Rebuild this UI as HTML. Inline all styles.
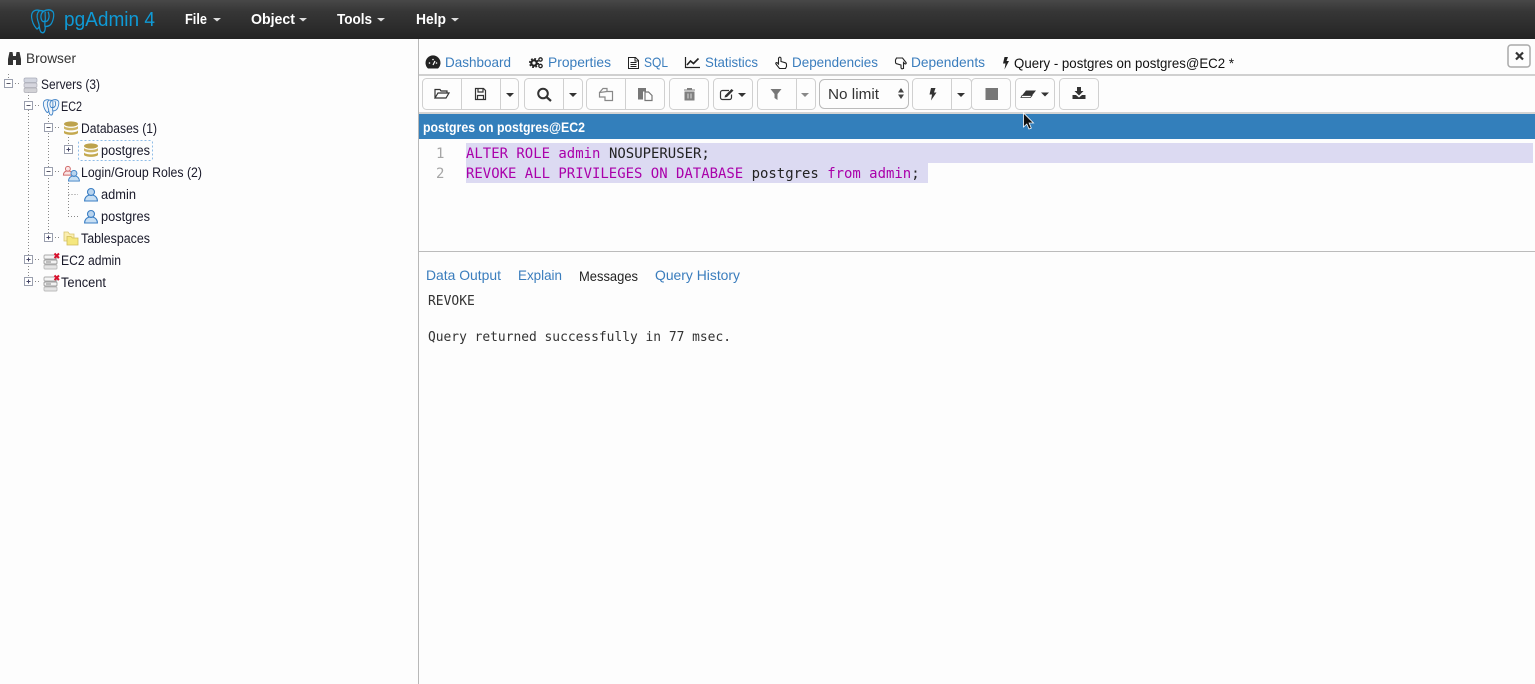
<!DOCTYPE html>
<html><head><meta charset="utf-8"><title>pgAdmin 4</title>
<style>
html,body{margin:0;padding:0;width:1535px;height:684px;overflow:hidden;background:#fdfdfd}
svg{display:block}
text{font-family:"Liberation Sans",sans-serif;font-size:14px;fill:#222}
.l{fill:#3a7dbd}
.m{fill:#fff;font-size:15px;font-weight:bold}
.t{fill:#1a1a2a;font-size:13.500px}
.c{font-family:"DejaVu Sans Mono",monospace;font-size:14px;fill:#222}
.p{font-family:"DejaVu Sans Mono",monospace;font-size:14px;fill:#a0a}
.o{font-family:"DejaVu Sans Mono",monospace;font-size:13px;fill:#333}
.n{font-family:"DejaVu Sans Mono",monospace;font-size:14px;fill:#a6a6a6}
.b{fill:#fdfdfd;stroke:#d0d0d0;stroke-width:1}
.d{stroke:#d0d0d0;stroke-width:1}
.dot{stroke:#888;stroke-width:1;stroke-dasharray:1 2;fill:none}
</style></head><body>
<svg width="1535" height="684" viewBox="0 0 1535 684" xmlns="http://www.w3.org/2000/svg">
<defs>
<linearGradient id="hd" x1="0" y1="0" x2="0" y2="1"><stop offset="0" stop-color="#484848"/><stop offset=".3" stop-color="#363636"/><stop offset=".7" stop-color="#2c2c2c"/><stop offset="1" stop-color="#232323"/></linearGradient>
<g id="minus"><rect x="-4" y="-4" width="8" height="8" fill="#fff" stroke="#9a9fae"/><path d="M-2 0H2" stroke="#556" fill="none"/></g>
<g id="plus"><rect x="-4" y="-4" width="8" height="8" fill="#fff" stroke="#9a9fae"/><path d="M-2 0H2M0-2V2" stroke="#446" fill="none"/></g>
<g id="db"><ellipse cx="7" cy="3" rx="7" ry="2.600" fill="#bda24c"/><path d="M0 5c2 2.500 12 2.500 14 0v2.500c-2 2.500-12 2.500-14 0z" fill="#cdb564"/><path d="M0 9.500c2 2.500 12 2.500 14 0V12c-2 2.500-12 2.500-14 0z" fill="#c4a94f"/></g>
<g id="srv"><rect x="0" y="0" width="13" height="4.500" rx="1.500" fill="#d2d5df" stroke="#a8abb8" stroke-width=".7"/><rect x="0" y="5" width="13" height="4.500" rx="1.500" fill="#d6d6de" stroke="#aeaeb8" stroke-width=".7"/><rect x="0" y="10" width="13" height="4.500" rx="1.500" fill="#d2d2d6" stroke="#aeaeb6" stroke-width=".7"/></g>
<g id="srvx"><rect x="0" y="1" width="13" height="4" rx="1" fill="#f4f4f4" stroke="#aaa" stroke-width=".9"/><rect x="0" y="6" width="13" height="4" rx="1" fill="#f2f2f2" stroke="#999" stroke-width=".9"/><path d="M2 8H7" stroke="#888"/><rect x="0" y="11" width="13" height="4" rx="1" fill="#e4e4e4" stroke="#bbb" stroke-width=".9"/><path d="M10.500-.5l4.500 4.500M15-.5l-4.500 4.500" stroke="#d8102c" stroke-width="2" fill="none"/></g>
<g id="user"><circle cx="7" cy="4" r="3.500" fill="#b9d4ee" stroke="#3a7ec4" stroke-width="1.100"/><path d="M.6 13c0-4 3-5.500 4.500-6 1.200.6 2.600.6 3.800 0 1.500.5 4.500 2 4.500 6z" fill="#c8dff3" stroke="#3a7ec4" stroke-width="1.100"/></g>
<path id="ele" d="M7 1C3 0 0 2 .5 6c.4 3 2 6 4 8 .8.800 1.600-.5 2.300-1.500.4 2 .7 4.500 2.700 4.500 1.500 0 2.200-2 2.200-4.500 1.500 0 3 0 4.500-1.500C18 9 19.500 4 18 2 16 0 12.500.5 10.500 1.500 9.500 1.300 8 1.200 7 1zM7 1c-1.800 1.500-2.500 4-1.500 7 .4 1.500 1.200 2.300 1.300 4.500M10.500 1.500c-2 1-3 3.500-2 6 .6 1.500 2 2 3 1 .7-2-.3-4 .2-6.500M14 2c1 2 1 4 .2 5.500-.7 1.200-2 1.500-2.700 1.500-.2 1.500-.2 3.500.2 4.200"/>
</defs>

<rect width="1535" height="684" fill="#fdfdfd"/>
<rect width="1535" height="39" fill="url(#hd)"/>
<use href="#ele" transform="translate(31,9) scale(1.220,1.400)" fill="none" stroke="#0f93cf" stroke-width="1"/>
<text x="64" y="26" textLength="91" lengthAdjust="spacingAndGlyphs" style="font-size:20px;fill:#0f9ad6">pgAdmin 4</text>
<text class="m" x="185" y="24" textLength="22" lengthAdjust="spacingAndGlyphs">File</text><path d="M213 18h8l-4 3.500z" fill="#ddd"/>
<text class="m" x="251" y="24" textLength="44" lengthAdjust="spacingAndGlyphs">Object</text><path d="M299 18h8l-4 3.500z" fill="#ddd"/>
<text class="m" x="337" y="24" textLength="35" lengthAdjust="spacingAndGlyphs">Tools</text><path d="M377 18h8l-4 3.500z" fill="#ddd"/>
<text class="m" x="416" y="24" textLength="30" lengthAdjust="spacingAndGlyphs">Help</text><path d="M451 18h8l-4 3.500z" fill="#ddd"/>

<!-- left panel -->
<rect x="418" y="39" width="1" height="645" fill="#b8b8b8"/>
<path d="M9.500 52h3l.5 3v10H8v-6zM16.500 52h3l1.500 7v6h-5V55zM13 56h3v4h-3z" fill="#333"/>
<text x="26" y="63" textLength="50" lengthAdjust="spacingAndGlyphs" style="fill:#333">Browser</text>

<path class="dot" d="M8.500 74V79M12 83.500H20M28.500 92V281M32 105.500H40M48.500 115V237M52 127.500H60M68.500 137V145M52 171.500H60M68.500 183V216.500H78M68.500 194.500H78M52 237.500H60M32 259.500H40M32 281.500H40"/>

<use href="#minus" x="8.500" y="83.500"/><use href="#srv" x="24" y="78"/><text class="t" x="41" y="89" textLength="59" lengthAdjust="spacingAndGlyphs">Servers (3)</text>
<use href="#minus" x="28.500" y="105.500"/><use href="#ele" transform="translate(43,99) scale(.85,.95)" fill="#eef4fa" stroke="#3a7ec4" stroke-width="1"/><text class="t" x="61" y="111" textLength="21" lengthAdjust="spacingAndGlyphs">EC2</text>
<use href="#minus" x="48.500" y="127.500"/><use href="#db" x="64" y="121"/><text class="t" x="81" y="133" textLength="76" lengthAdjust="spacingAndGlyphs">Databases (1)</text>
<use href="#plus" x="68.500" y="149.500"/>
<rect x="78.500" y="140.500" width="74" height="20" rx="2" fill="#fdfdfd" stroke="#8fbde8" stroke-dasharray="2 2"/>
<use href="#db" x="84" y="143"/><text class="t" x="101" y="155" textLength="49" lengthAdjust="spacingAndGlyphs">postgres</text>
<use href="#minus" x="48.500" y="171.500"/>
<g transform="translate(63,166) scale(.7)"><circle cx="7" cy="4" r="3.500" fill="#fbe5e5" stroke="#d06a6a" stroke-width="1.400"/><path d="M.6 13c0-4 3-5.500 4.500-6 1.200.6 2.600.6 3.800 0 1.500.5 4.500 2 4.500 6z" fill="#fbe5e5" stroke="#d06a6a" stroke-width="1.400"/></g>
<g transform="translate(68,170) scale(.85)"><use href="#user"/></g>
<text class="t" x="81" y="177" textLength="121" lengthAdjust="spacingAndGlyphs">Login/Group Roles (2)</text>
<use href="#user" x="84" y="188"/><text class="t" x="101" y="199" textLength="35" lengthAdjust="spacingAndGlyphs">admin</text>
<use href="#user" x="84" y="210"/><text class="t" x="101" y="221" textLength="49" lengthAdjust="spacingAndGlyphs">postgres</text>
<use href="#plus" x="48.500" y="237.500"/>
<path d="M64 232h4l1.500 2H74v7H64z" fill="#fbeeb0" stroke="#d8c56c" stroke-width=".8"/><path d="M67 236.500h4l1.500 1.500H78v7H67z" fill="#f5e77e" stroke="#cfbc5a" stroke-width=".8"/>
<text class="t" x="81" y="243" textLength="69" lengthAdjust="spacingAndGlyphs">Tablespaces</text>
<use href="#plus" x="28.500" y="259.500"/><use href="#srvx" x="44" y="254"/><text class="t" x="61" y="265" textLength="60" lengthAdjust="spacingAndGlyphs">EC2 admin</text>
<use href="#plus" x="28.500" y="281.500"/><use href="#srvx" x="44" y="276"/><text class="t" x="61" y="287" textLength="45" lengthAdjust="spacingAndGlyphs">Tencent</text>

<!-- tabs -->
<path d="M428 68.500a7.500 7.500 0 1 1 10 0z" fill="#222"/><path d="M433 65l2-4" stroke="#fff" stroke-width="1.200"/><circle cx="429.500" cy="63" r=".8" fill="#fff"/><circle cx="436.500" cy="63" r=".8" fill="#fff"/><circle cx="433" cy="59.500" r=".8" fill="#fff"/>
<text class="l" x="445" y="67" textLength="66" lengthAdjust="spacingAndGlyphs">Dashboard</text>
<circle cx="534" cy="63" r="2.700" fill="none" stroke="#222" stroke-width="2.200"/><circle cx="534" cy="63" r="4.300" fill="none" stroke="#222" stroke-width="1.500" stroke-dasharray="1.800 1.600"/><circle cx="540.500" cy="59.500" r="1.700" fill="none" stroke="#222" stroke-width="1.300"/><circle cx="540.500" cy="66" r="1.700" fill="none" stroke="#222" stroke-width="1.300"/>
<text class="l" x="548" y="67" textLength="63" lengthAdjust="spacingAndGlyphs">Properties</text>
<path d="M628.500 57.500h7l3 3v8h-10zM635 57.500v3.500h3.500M630.500 62.500h6M630.500 64.500h6M630.500 66.500h6" fill="none" stroke="#222"/>
<text class="l" x="644" y="67" textLength="24" lengthAdjust="spacingAndGlyphs">SQL</text>
<path d="M685.500 57v10.500H700" fill="none" stroke="#222" stroke-width="1.200"/><path d="M687 65l3.500-4 3 2.500 5-5" fill="none" stroke="#222" stroke-width="1.600"/>
<text class="l" x="705" y="67" textLength="53" lengthAdjust="spacingAndGlyphs">Statistics</text>
<path d="M779 57.500c1-.8 2 0 2 1v3l4.500 1.300c1 .3 1 1.200 1 2v1.700l-1 2h-6l-3.500-4.500c-.7-1 .6-2 1.500-1l1 1v-5.500z" fill="#fff" stroke="#222" stroke-width="1.100"/>
<text class="l" x="792" y="67" textLength="86" lengthAdjust="spacingAndGlyphs">Dependencies</text>
<path d="M903 68.500c-1 .8-2 0-2-1v-2.500l-4.500-1.300c-1-.3-1-1.200-1-2v-1.700l1-2h6l3.500 4.500c.7 1-.6 2-1.500 1l-1-1v6z" fill="#fff" stroke="#222" stroke-width="1.100"/>
<text class="l" x="911" y="67" textLength="74" lengthAdjust="spacingAndGlyphs">Dependents</text>
<path d="M1004.500 57h3.500l-1.500 4h2.500l-4.500 8.500 1-6h-2.500z" fill="#222"/>
<text x="1014" y="68" textLength="220" lengthAdjust="spacingAndGlyphs" style="fill:#111">Query - postgres on postgres@EC2 *</text>

<rect x="1508" y="45" width="22" height="22" rx="3" fill="#fdfdfd" stroke="#aaa" stroke-width="1.500"/>
<path d="M1516 52.500l7 7M1523 52.500l-7 7" stroke="#333" stroke-width="2.200"/>
<rect x="419" y="74" width="1116" height="2" fill="#d0d0d0"/>

<!-- toolbar -->
<rect x="422.500" y="78.500" width="96" height="31" rx="4" class="b"/><path class="d" d="M461.500 79V109M500.500 79V109"/>
<rect x="524.500" y="78.500" width="58" height="31" rx="4" class="b"/><path class="d" d="M563.500 79V109"/>
<rect x="586.500" y="78.500" width="78" height="31" rx="4" class="b"/><path class="d" d="M625.500 79V109"/>
<rect x="669.500" y="78.500" width="39" height="31" rx="4" class="b"/>
<rect x="713.500" y="78.500" width="39" height="31" rx="4" class="b"/>
<rect x="757.500" y="78.500" width="58" height="31" rx="4" class="b"/><path class="d" d="M796.500 79V109"/>
<rect x="819.500" y="79.500" width="89" height="29" rx="5" fill="#fdfdfd" stroke="#bbb"/>
<text x="828" y="99" textLength="51" lengthAdjust="spacingAndGlyphs" style="font-size:15px;fill:#333">No limit</text>
<path d="M901 88l3 4.500h-6zM901 99l3-4.500h-6z" fill="#444"/>
<rect x="912.500" y="78.500" width="59" height="31" rx="4" class="b"/><path class="d" d="M951.500 79V109"/>
<rect x="971.500" y="78.500" width="39" height="31" rx="4" class="b"/>
<rect x="1015.500" y="78.500" width="39" height="31" rx="4" class="b"/>
<rect x="1059.500" y="78.500" width="39" height="31" rx="4" class="b"/>

<path d="M435 98v-8.500h5l1 1.500h6v2.500M435 98h11l3-5h-11z" fill="none" stroke="#333" stroke-width="1.200"/>
<path d="M475.500 88.500h8l2 2v9h-10zM478 88.500v3.500h5v-3.500M477.500 99.500v-4h6v4" fill="none" stroke="#333" stroke-width="1.200"/>
<path d="M506 93h8l-4 4z" fill="#333"/>
<circle cx="543" cy="93.500" r="4.800" fill="none" stroke="#333" stroke-width="2"/><path d="M546.500 97l4.500 4" stroke="#333" stroke-width="2.200"/>
<path d="M569 93h8l-4 4z" fill="#333"/>
<path d="M599.500 92.500l3.500-4h4v3M607 91.500h5.500v9h-7.500v-3.500h-5.500V92.500z" fill="none" stroke="#888" stroke-width="1.200"/>
<path d="M638 88h8v3.500h-3v8h-5z" fill="#777"/><path d="M645 92h3.500l3.500 3.500v5h-7z" fill="#fff" stroke="#777" stroke-width="1.200"/>
<path d="M684 90h11M687.500 90v-1.500h4V90M685 92v8h9v-8z" fill="#808080" stroke="#808080"/><path d="M688 93.500v5M691 93.500v5" stroke="#ddd"/>
<path d="M729 90.500h-6.500a2 2 0 0 0-2 2v5a2 2 0 0 0 2 2h7a2 2 0 0 0 2-2v-3" fill="none" stroke="#333" stroke-width="1.200"/><path d="M725 95.500l6.500-6.500 2 1.500-6.500 6.500-2.500.5z" fill="#333"/><path d="M738 93h8l-4 4z" fill="#333"/>
<path d="M770.500 89h11l-4 5v6l-3-2v-4z" fill="#777"/>
<path d="M801 93h8l-4 4z" fill="#888"/>
<path d="M931 88h4.500l-1.500 4.500h2.500l-5.500 8 1-6h-2.500z" fill="#333"/>
<path d="M957 93h8l-4 4z" fill="#333"/>
<rect x="985.500" y="88" width="12.500" height="12" fill="#777"/>
<path d="M1026 90.500h10l-4 5h-10z" fill="#333"/><path d="M1022 95.500h10l-1.500 2h-9.500z" fill="#fff" stroke="#333" stroke-width=".8"/><path d="M1041 92.500h8l-4 4z" fill="#333"/>
<path d="M1077 87h4v4h2.500l-4.500 4.500-4.500-4.500h2.500zM1072.500 95h3.500l3 2.500 3-2.500h3.500v4h-13z" fill="#333"/>

<!-- title bar -->
<rect x="419" y="112" width="1116" height="2" fill="#d4d4d4"/>
<rect x="419" y="114" width="1116" height="25" fill="#337fbb"/>
<text x="423" y="132" textLength="162" lengthAdjust="spacingAndGlyphs" style="fill:#fff;font-weight:bold;font-size:13.500px">postgres on postgres@EC2</text>

<!-- editor -->
<rect x="466" y="143" width="1067" height="20" fill="#dcdaf2"/>
<rect x="466" y="163" width="462" height="20" fill="#dcdaf2"/>
<text class="n" x="436" y="158">1</text><text class="n" x="436" y="178">2</text>
<text class="p" x="466" y="158" textLength="134.400" lengthAdjust="spacingAndGlyphs">ALTER ROLE admin</text><text class="c" x="609" y="158" textLength="100.800" lengthAdjust="spacingAndGlyphs">NOSUPERUSER;</text>
<text class="p" x="466" y="178" textLength="277.200" lengthAdjust="spacingAndGlyphs">REVOKE ALL PRIVILEGES ON DATABASE</text><text class="c" x="751.600" y="178" textLength="67.200" lengthAdjust="spacingAndGlyphs">postgres</text><text class="p" x="827.200" y="178" textLength="84" lengthAdjust="spacingAndGlyphs">from admin</text><text class="c" x="911.200" y="178">;</text>

<rect x="419" y="251" width="1116" height="1" fill="#bbb"/>
<text class="l" x="426" y="280" textLength="75" lengthAdjust="spacingAndGlyphs">Data Output</text>
<text class="l" x="518" y="280" textLength="44" lengthAdjust="spacingAndGlyphs">Explain</text>
<text x="579" y="281" textLength="59" lengthAdjust="spacingAndGlyphs" style="fill:#222">Messages</text>
<text class="l" x="655" y="280" textLength="85" lengthAdjust="spacingAndGlyphs">Query History</text>
<text class="o" x="428" y="305" textLength="46.800" lengthAdjust="spacingAndGlyphs">REVOKE</text>
<text class="o" x="428" y="341" textLength="303" lengthAdjust="spacingAndGlyphs">Query returned successfully in 77 msec.</text>

<!-- cursor -->
<path d="M1023.500 113v14l3.300-3 2.200 5 2.300-1-2.200-5h4.400z" fill="#111" stroke="#fff" stroke-width=".8"/>
</svg>
</body></html>
